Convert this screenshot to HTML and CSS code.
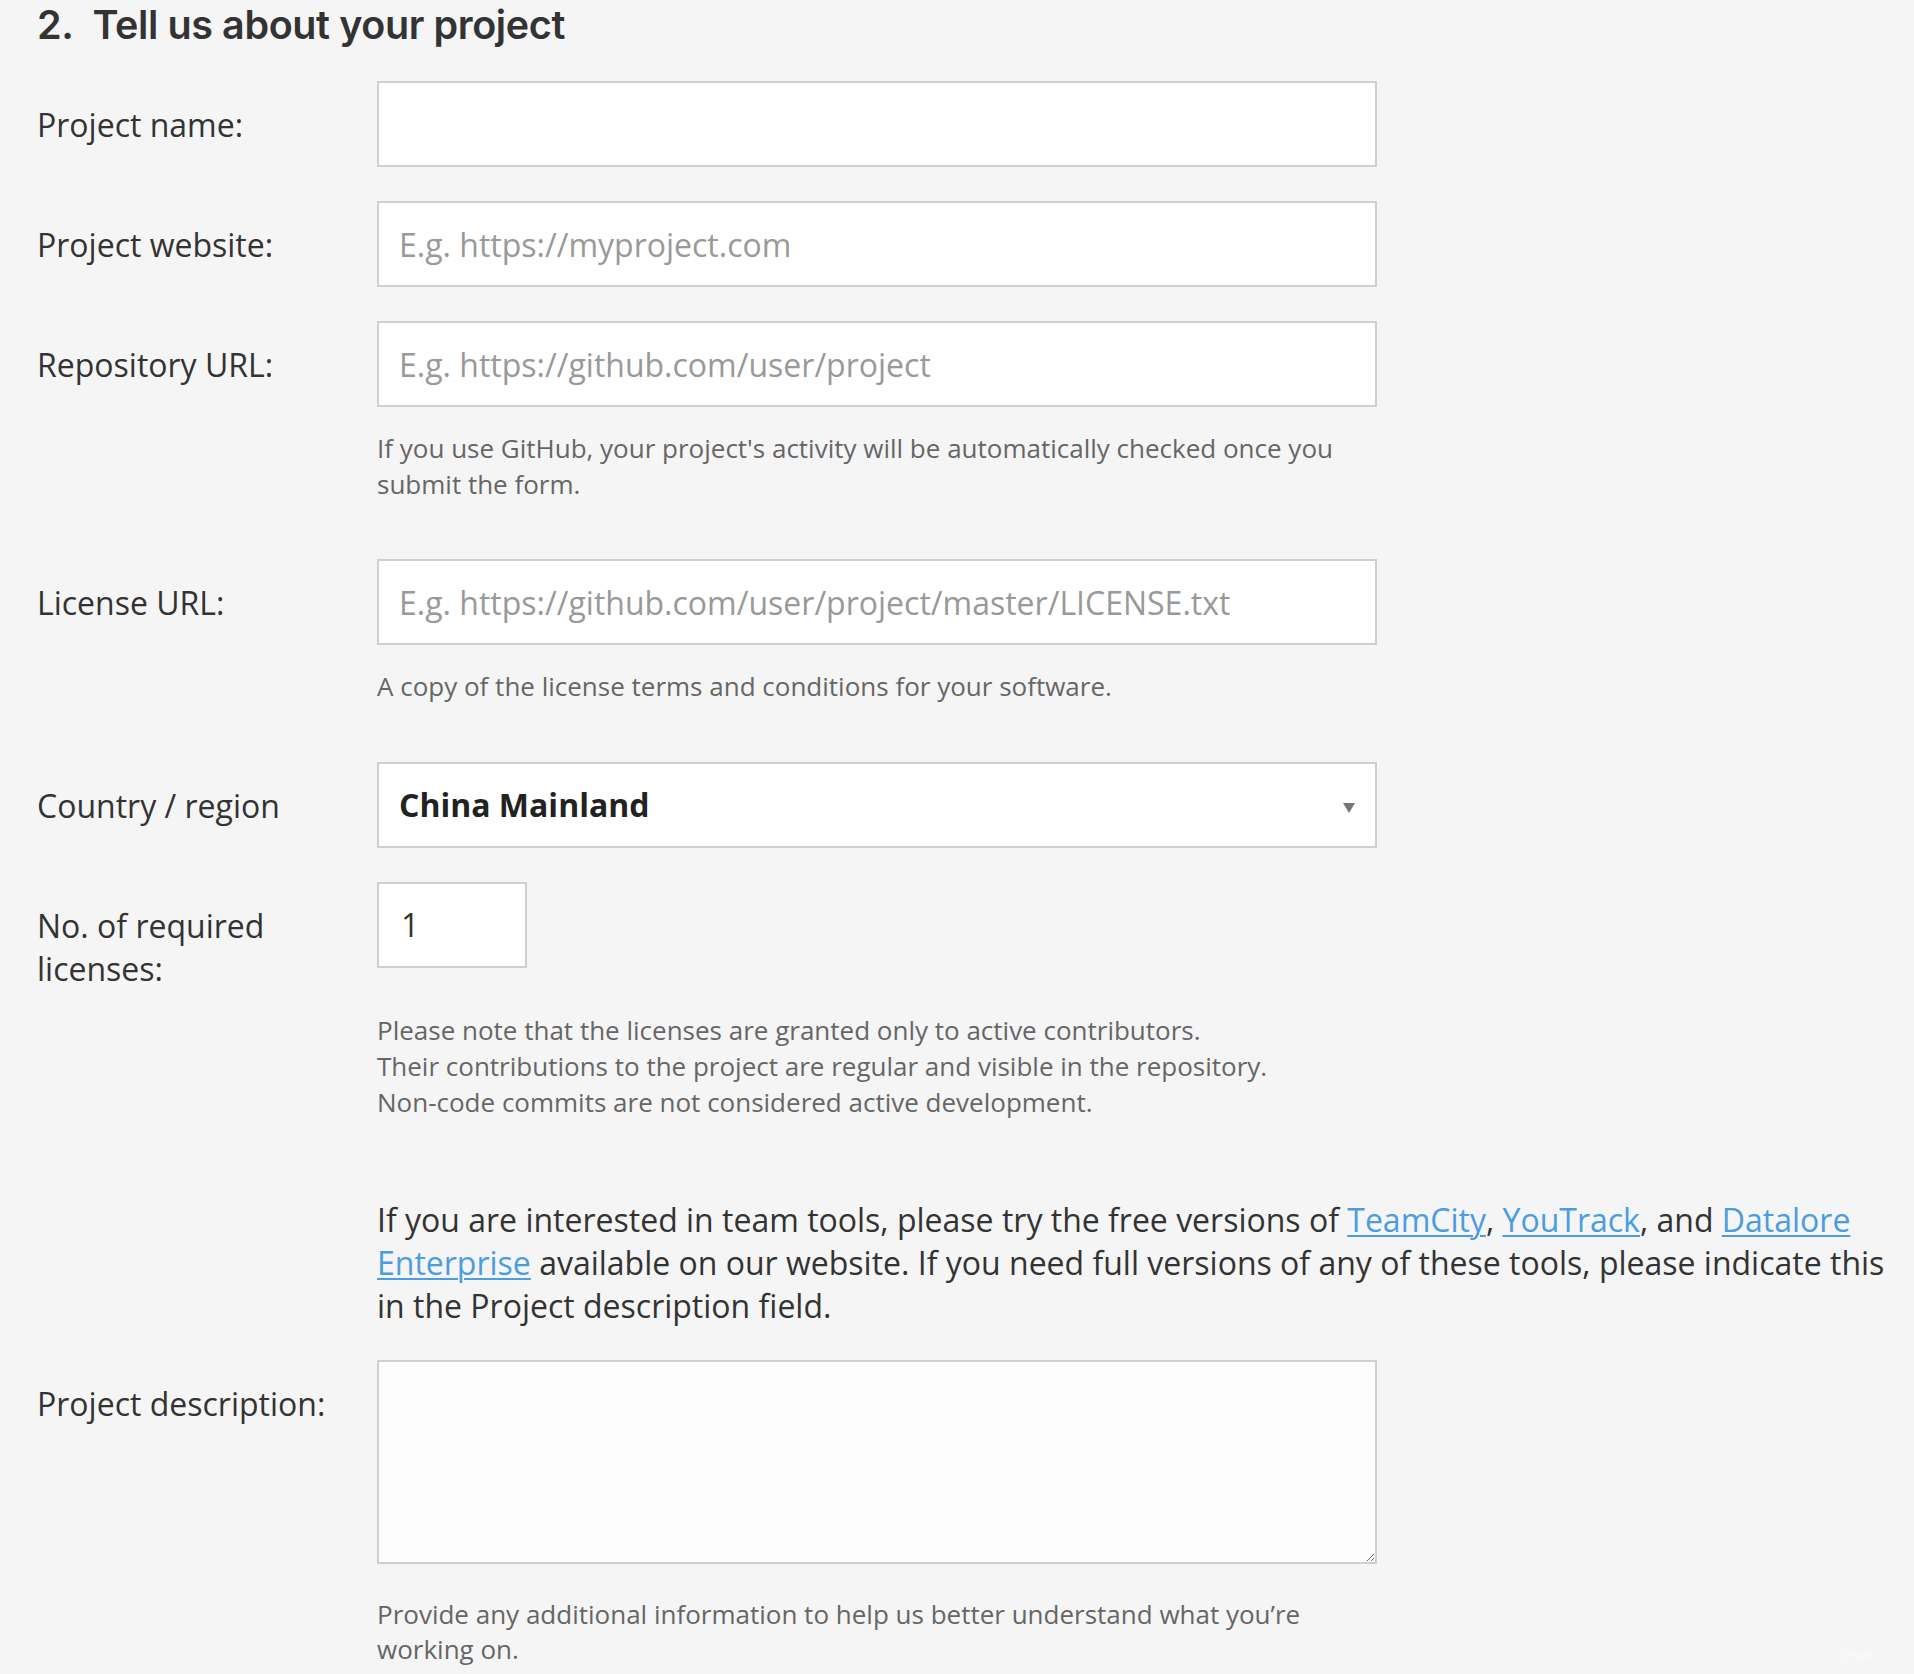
FILE: index.html
```html
<!DOCTYPE html>
<html lang="en">
<head>
<meta charset="utf-8">
<title>Tell us about your project</title>
<link rel="stylesheet" href="styles.css">
</head>
<body>
<form class="form">
  <h2 class="heading">2.&nbsp; Tell us about your project</h2>

  <div class="row">
    <label class="label" for="pname">Project name:</label>
    <input class="field" id="pname" type="text">
  </div>

  <div class="row">
    <label class="label" for="pweb">Project website:</label>
    <input class="field" id="pweb" type="text" placeholder="E.g. https://myproject.com">
  </div>

  <div class="row row-help">
    <label class="label" for="repo">Repository URL:</label>
    <input class="field" id="repo" type="text" placeholder="E.g. https://github.com/user/project">
  </div>
  <p class="help">If you use GitHub, your project's activity will be automatically checked once you submit the form.</p>

  <div class="row row-help">
    <label class="label" for="lic">License URL:</label>
    <input class="field" id="lic" type="text" placeholder="E.g. https://github.com/user/project/master/LICENSE.txt">
  </div>
  <p class="help help-single">A copy of the license terms and conditions for your software.</p>

  <div class="row">
    <label class="label" for="country">Country / region</label>
    <div class="select">
      <span class="select-value">China Mainland</span>
      <span class="select-arrow"></span>
    </div>
  </div>

  <div class="row row-help">
    <label class="label" for="num">No. of required licenses:</label>
    <div><input class="field field-num" id="num" type="text" value="1"></div>
  </div>
  <p class="help help-last">Please note that the licenses are granted only to active contributors.<br>Their contributions to the project are regular and visible in the repository.<br>Non-code commits are not considered active development.</p>

  <p class="note">If you are interested in team tools, please try the free versions of <a href="#">TeamCity</a>, <a href="#">YouTrack</a>, and <a href="#">Datalore Enterprise</a> available on our website. If you need full versions of any of these tools, please indicate this in the Project description field.</p>

  <div class="row row-area">
    <label class="label" for="desc">Project description:</label>
    <textarea class="area" id="desc"></textarea>
  </div>
  <p class="help help-desc">Provide any additional information to help us better understand what you’re working on.</p>
</form>
<span class="watermark">znwx.cn</span>
</body>
</html>
```

FILE: styles.css
```css
html, body {
  margin: 0;
  padding: 0;
  background: #f5f5f5;
}

body {
  font-family: "Open Sans", "Noto Sans", sans-serif;
  color: #333;
  width: 1914px;
  min-height: 1674px;
  overflow: hidden;
}

.form {
  padding: 0 0 0 37px;
}

.heading {
  margin: 0;
  padding-top: 0;
  font-family: Inter, "Liberation Sans", sans-serif;
  font-weight: 600;
  font-size: 39.5px;
  line-height: 50px;
  letter-spacing: -0.4px;
  color: #333;
  height: 50px;
  margin-bottom: 31px;
}

.row {
  display: grid;
  grid-template-columns: 340px 1000px;
  align-items: start;
  margin-bottom: 34px;
}

.row-help {
  margin-bottom: 0;
}

.label {
  display: block;
  padding-top: 22px;
  font-size: 32px;
  line-height: 43px;
  color: #333;
  padding-right: 20px;
}

.field {
  box-sizing: border-box;
  display: block;
  width: 1000px;
  height: 86px;
  margin: 0;
  padding: 0 20px;
  border: 2px solid #cfcfcf;
  border-radius: 0;
  background: #fff;
  font-family: "Open Sans", "Noto Sans", sans-serif;
  font-size: 32px;
  color: #333;
  outline: none;
}

.field::placeholder {
  color: #999;
  opacity: 1;
}

.field-num {
  width: 150px;
  padding: 0 22px;
}

.select {
  box-sizing: border-box;
  width: 1000px;
  height: 86px;
  border: 2px solid #cfcfcf;
  background: #fff;
  display: flex;
  align-items: center;
  justify-content: space-between;
  padding: 0 20px 0 20px;
}

.select-value {
  font-size: 32px;
  font-weight: 700;
  color: #222;
}

.select-arrow {
  width: 0;
  height: 0;
  border-left: 6px solid transparent;
  border-right: 6px solid transparent;
  border-top: 10px solid #777;
  margin-right: 0;
  margin-top: 6px;
}

.help {
  margin: 24px 0 57px 340px;
  width: 1000px;
  font-size: 26px;
  line-height: 35.5px;
  color: #666;
}

.help-last {
  line-height: 36px;
  margin-top: 22px;
  margin-bottom: 78px;
}

.help-desc {
  margin-top: 33px;
  margin-bottom: 0;
}

.note {
  margin: 0 0 33px 340px;
  width: 1530px;
  font-size: 32px;
  line-height: 43px;
  color: #333;
}

.note a {
  color: #4a9de2;
  text-decoration: underline;
  text-decoration-thickness: 2px;
  text-underline-offset: 3px;
}

.row-area {
  margin-bottom: 0;
}

.area {
  box-sizing: border-box;
  display: block;
  width: 1000px;
  height: 204px;
  margin: 0;
  border: 2px solid #cfcfcf;
  background: #fdfdfd;
  font-family: "Open Sans", "Noto Sans", sans-serif;
  font-size: 24px;
  resize: vertical;
  outline: none;
}

.watermark {
  position: absolute;
  right: 22px;
  bottom: 10px;
  font-size: 14px;
  color: #fafafa;
  font-family: "Open Sans", sans-serif;
}
```
